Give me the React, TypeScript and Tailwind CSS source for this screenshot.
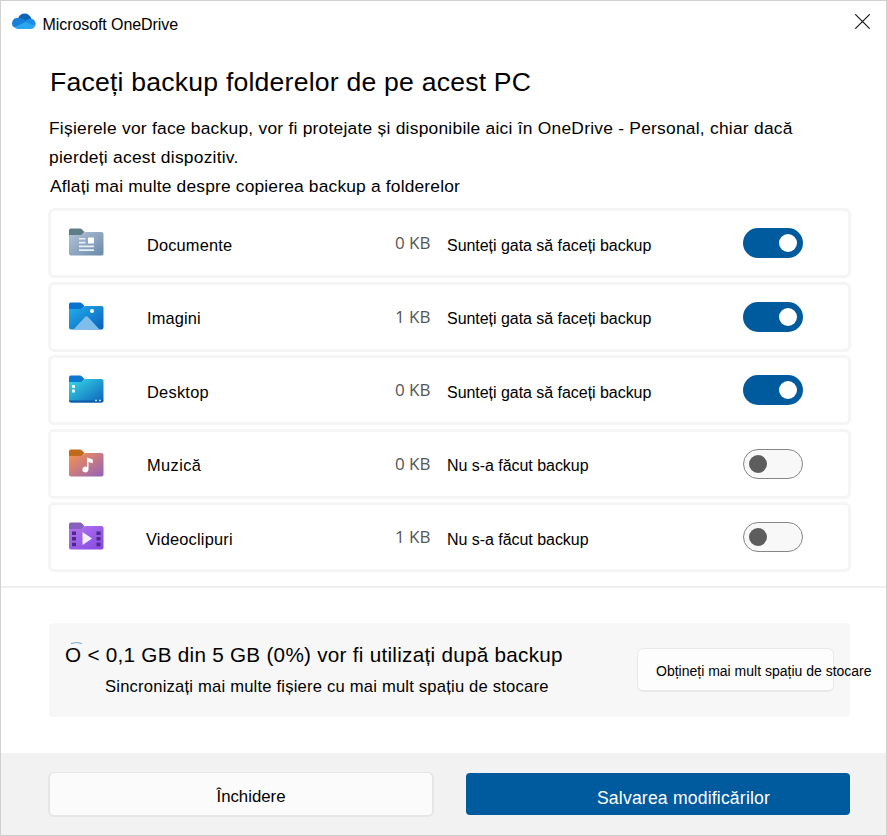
import { ReactNode } from 'react';

interface Folder {
    name: string;
    size: string;
    enabled: boolean;
    icon: ReactNode;
    nameClass: string;
}

function FolderShape({ id, from, to, tab, children }: { id: string; from: string; to: string; tab: string; children: ReactNode }) {
    return (
        <svg width="36" height="28" viewBox="0 0 36 28">
            <defs>
                <linearGradient id={id} x1="0" y1="0" x2="1" y2="1">
                    <stop offset="0" stopColor={from} />
                    <stop offset="1" stopColor={to} />
                </linearGradient>
            </defs>
            <path d="M1 8V2.2Q1 .5 2.7 .5H12q1.2 0 2 .9L16.5 4 13 8Z" fill={tab} />
            <path d="M1 7h11.5q1 0 1.8-.8L16 4.5q.7-.6 1.7-.6H33.5Q35.5 3.9 35.5 5.8V25.5Q35.5 27.5 33.5 27.5H3Q1 27.5 1 25.5Z" fill={`url(#${id})`} />
            {children}
        </svg>
    );
}

const folders: Folder[] = [
    {
        name: 'Documente',
        size: '0 KB',
        enabled: true,
        nameClass: 'tracking-[0.15px]',
        icon: (
            <FolderShape id="docs" from="#b4c4d6" to="#6a89ab" tab="#5f7d86">
                <path d="M11 10h6.5v1.6H11zM11 13.8h6.5v1.7H11zM11 17.5h15v1.8H11zM11 21.2h15V23H11z" fill="#e8eef5" />
                <rect x="20" y="9.5" width="6" height="6" rx="0.5" fill="#fff" />
            </FolderShape>
        ),
    },
    {
        name: 'Imagini',
        size: '1 KB',
        enabled: true,
        nameClass: 'tracking-[0.15px]',
        icon: (
            <FolderShape id="pics" from="#22b0ee" to="#0a5fba" tab="#0873d0">
                <path d="M5.5 27.5 16.8 15.2q1.7-1.8 3.4 0L31.5 27.5Z" fill="#7fbdec" />
                <circle cx="24" cy="9" r="2" fill="#fff" />
            </FolderShape>
        ),
    },
    {
        name: 'Desktop',
        size: '0 KB',
        enabled: true,
        nameClass: 'tracking-[0.25px]',
        icon: (
            <FolderShape id="desk" from="#38dbe8" to="#0c62ba" tab="#0b78d2">
                <path d="M4 10h3v3H4zM4 14.5h3v3H4z" fill="#e2fbff" />
                <path d="M1 25.5h34.5q0 2-2 2H3q-2 0-2-2Z" fill="#0b5ba8" />
                <path d="M27 24.8h2v1.5h-2zM31 24.8h2v1.5h-2z" fill="#b9dcf5" />
            </FolderShape>
        ),
    },
    {
        name: 'Muzică',
        size: '0 KB',
        enabled: false,
        nameClass: 'tracking-[0.4px]',
        icon: (
            <FolderShape id="music" from="#fb944a" to="#9260bc" tab="#c06a1a">
                <path d="M19 8.5l5.8 2v3.7L20.5 13v7.5a3.1 2.9 0 1 1-1.5-2.5Z" fill="#fff" />
            </FolderShape>
        ),
    },
    {
        name: 'Videoclipuri',
        size: '1 KB',
        enabled: false,
        nameClass: 'tracking-[0.2px] -ml-px',
        icon: (
            <FolderShape id="video" from="#b377f0" to="#8547e0" tab="#8561bd">
                <path d="M4 9.5h4V13H4zM4 15h4v3.500H4zM4 20.800h4v3.500H4zM28.500 9.500h4V13h-4zM28.500 15h4v3.500h-4zM28.500 20.800h4v3.500h-4z" fill="#4b2a86" />
                <path d="M14.5 10v13l9.500-6.500Z" fill="#f4efff" />
            </FolderShape>
        ),
    },
];

function Toggle({ on }: { on: boolean }) {
    return on ? (
        <button className="w-[60px] h-[30px] rounded-full bg-[#005a9e] flex items-center justify-end pr-[6px]">
            <span className="size-[18px] rounded-full bg-white" />
        </button>
    ) : (
        <button className="w-[60px] h-[30px] rounded-full border border-[#868686] bg-[#f8f8f8] flex items-center pl-[5px]">
            <span className="size-[18px] rounded-full bg-[#5d5d5d]" />
        </button>
    );
}

function FolderRow({ folder }: { folder: Folder }) {
    return (
        <div className="h-[70px] border-3 border-[#f5f5f5] rounded-md flex items-start pl-[17px]">
            <div className="w-[79px] shrink-0 pt-[17px]">{folder.icon}</div>
            <div className="w-[213px] shrink-0 pt-[23.5px] text-[16.4px] leading-5">
                <span className={folder.nameClass}>{folder.name}</span>
            </div>
            <div className="w-[70.5px] shrink-0 pt-[22px] text-right text-[17px] leading-5 font-medium text-[#555] font-['Open_Sans',sans-serif]">{folder.size}</div>
            <div className="w-[312.5px] shrink-0 pl-[16.5px] pt-[24.5px] text-[16px] leading-5 tracking-[-0.04px]">
                {folder.enabled ? 'Sunteți gata să faceți backup' : 'Nu s-a făcut backup'}
            </div>
            <div className="pt-[17px]"><Toggle on={folder.enabled} /></div>
        </div>
    );
}

export default function App() {
    return (
        <div className="w-[887px] h-[836px] border border-[#d0d0d0] bg-white text-black font-['Liberation_Sans',Arial,sans-serif] whitespace-nowrap flex flex-col overflow-hidden">
            <header className="h-[52px] flex items-start justify-between pl-[11px] pr-4">
                <div className="flex items-start">
                    <svg className="mt-[12px]" width="24" height="17" viewBox="0 0 24 17">
                        <path d="M6 5.5Q8 .5 12.5 .5Q17.5 .5 19.5 6L14 11 5 7Z" fill="#0f64b8" />
                        <path d="M6.2 5Q9 4.700 11 6l5.500 3.500-13 5.500A5.200 5.200 0 0 1 6.200 5Z" fill="#1680d8" />
                        <path d="M12.5 8.500q3-3 6.800-2.800A5 5 0 0 1 23 13L15 11Z" fill="#1a8fe3" />
                        <path d="M2.5 14 13.500 9 23 13Q21.800 16 18.800 16H6Q4 16 2.500 14Z" fill="#2aa5ee" />
                    </svg>
                    <span className="ml-[6.5px] mt-[14px] text-[16px] leading-5 tracking-[-0.08px]">Microsoft OneDrive</span>
                </div>
                <svg className="mt-[13px]" width="15" height="15" viewBox="0 0 15 15" stroke="#111" strokeWidth="1.1">
                    <path d="M.3.3l14.4 14.4M14.7.3l-14.4 14.4" />
                </svg>
            </header>

            <section className="pl-[49px]">
                <h1 className="mt-[13px] text-[26.6px] leading-8 tracking-[0.21px]">Faceți backup folderelor de pe acest PC</h1>
                <div className="mt-[16px] -ml-px text-[17.4px] leading-[29px] tracking-[0.24px]">
                    <p>Fișierele vor face backup, vor fi protejate și disponibile aici în OneDrive - Personal, chiar dacă</p>
                    <p>pierdeți acest dispozitiv.</p>
                    <p className="pl-px tracking-[0.17px]">Aflați mai multe despre copierea backup a folderelor</p>
                </div>
            </section>

            <section className="mt-[7px] ml-[47px] w-[803px] flex flex-col gap-[3.5px]">
                {folders.map(folder => <FolderRow key={folder.name} folder={folder} />)}
            </section>

            <section className="mt-[14px] border-t-2 border-[#f0f0f0] pt-[35px] pl-[48px]">
                <div className="w-[801px] h-[94px] rounded bg-[#f7f7f7] flex items-start">
                    <div className="w-[588px] pl-4 pt-[20px]">
                        <div className="relative text-[20.7px] leading-6 tracking-[0.27px]">
                            <svg className="absolute left-[6px] -top-px" width="11" height="2" viewBox="0 0 11 2">
                                <path d="M0 1.5Q5.5-.5 11 1.5" stroke="#6ba9da" fill="none" />
                            </svg>
                            O &lt; 0,1 GB din 5 GB (0%) vor fi utilizați după backup
                        </div>
                        <div className="mt-[10px] pl-10 text-[16.6px] leading-5 tracking-[0.2px]">Sincronizați mai multe fișiere cu mai mult spațiu de stocare</div>
                    </div>
                    <button className="mt-[25px] w-[197px] h-[44px] rounded-md border border-b-2 border-[#e9e9e9] bg-[#fdfdfd] pl-[18px] pt-[3px] text-left text-[14px]">
                        Obțineți mai mult spațiu de stocare
                    </button>
                </div>
            </section>

            <footer className="mt-auto h-[82px] bg-[#f2f2f2] flex items-start pl-[47px] pt-[19px]">
                <button className="w-[386px] h-[45px] rounded-md border-2 border-t border-[#e6e6e6] bg-[#fbfbfb] pl-[20px] pt-[5px] text-[16.8px]">Închidere</button>
                <button className="ml-[32px] mt-px w-[384px] h-[42px] rounded bg-[#005a9e] pl-[51px] pt-[8px] text-[17.6px] tracking-[0.18px] text-white">Salvarea modificărilor</button>
            </footer>
        </div>
    );
}
